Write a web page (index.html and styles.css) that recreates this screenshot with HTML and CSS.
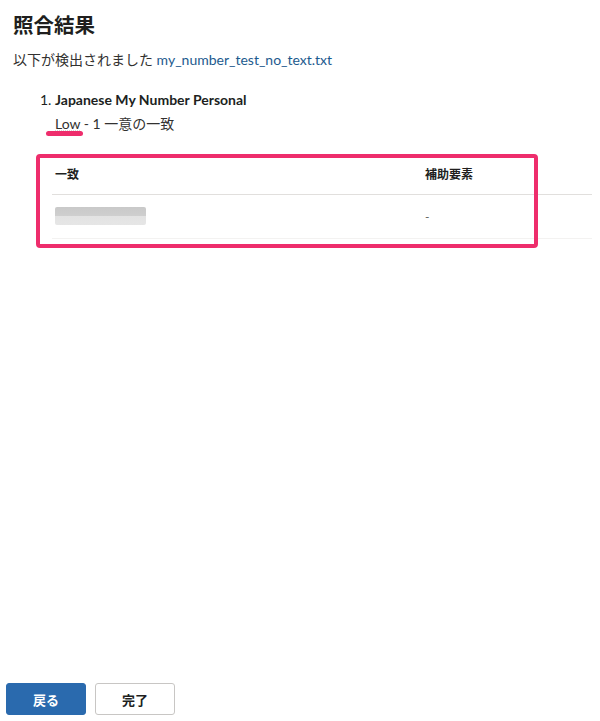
FILE: index.html
```html
<!DOCTYPE html>
<html lang="ja">
<head>
    <meta charset="UTF-8">
    <meta name="viewport" content="width=device-width, initial-scale=1.0">
    <title>照合結果</title>
    <link rel="stylesheet" href="styles.css">
</head>
<body>
    <main class="panel">
        <h1>照合結果</h1>
        <p class="summary">
            以下が検出されました <a href="#" class="file-link">my_number_test_no_text.txt</a>
        </p>

        <ol class="results">
            <li>
                <span class="result-name">Japanese My Number Personal</span>
                <div class="result-meta">
                    <span class="level">Low</span> - 1 一意の一致
                    <span class="mark-underline"></span>
                </div>

                <div class="match-wrap">
                    <table class="match-table">
                        <thead>
                            <tr>
                                <th class="col-match">一致</th>
                                <th>補助要素</th>
                            </tr>
                        </thead>
                        <tbody>
                            <tr>
                                <td class="col-match"><span class="redacted"></span></td>
                                <td>-</td>
                            </tr>
                        </tbody>
                    </table>
                    <div class="mark-box"></div>
                </div>
            </li>
        </ol>
    </main>

    <footer class="actions">
        <button class="btn btn-primary">戻る</button>
        <button class="btn btn-secondary">完了</button>
    </footer>
</body>
</html>
```

FILE: styles.css
```css
* {
    margin: 0;
    padding: 0;
    box-sizing: border-box;
}

body {
    font-family: Lato, "Noto Sans CJK JP", sans-serif;
    background: #fff;
    color: #323130;
    min-height: 100vh;
    display: flex;
    flex-direction: column;
    padding: 0 0 6px;
}

.panel {
    padding: 10px 0 0 13px;
    flex: 1;
}

h1 {
    font-size: 20.5px;
    font-weight: 700;
    line-height: 30px;
    color: #201f1e;
    margin-bottom: 11px;
}

.summary {
    font-size: 14px;
    line-height: 18px;
    color: #323130;
}

.file-link {
    color: #1d5a8e;
    text-decoration: none;
}

.results {
    list-style: none;
    margin-top: 22px;
    padding-left: 27px;
}

.result-name {
    display: block;
    font-size: 14px;
    font-weight: 700;
    line-height: 18px;
    color: #201f1e;
}

.result-name::before {
    content: "1. ";
    font-weight: 400;
}

.result-meta {
    position: relative;
    margin-top: 6px;
    padding-left: 15px;
    font-size: 14px;
    line-height: 18px;
    color: #323130;
}

.level {
    text-decoration: underline;
    text-decoration-style: dotted;
    text-underline-offset: 2px;
}

.mark-underline {
    position: absolute;
    left: 6px;
    top: 16px;
    width: 37px;
    height: 5px;
    border-radius: 3px;
    background: #ee2d6c;
}

.match-wrap {
    position: relative;
    margin-top: 21px;
    margin-left: 12px;
    width: 540px;
}

.match-table {
    width: 100%;
    border-collapse: collapse;
    font-size: 12px;
    color: #201f1e;
}

.match-table th {
    text-align: left;
    font-weight: 600;
    height: 40px;
    padding: 0 3px;
    border-bottom: 1px solid #e1dfdd;
}

.match-table td {
    height: 44px;
    padding: 0 3px;
    border-bottom: 1px solid #f3f2f1;
    color: #605e5c;
}

.col-match {
    width: 370px;
}

.redacted {
    display: block;
    width: 91px;
    height: 18px;
    background: linear-gradient(#c9c9c9 0%, #cfcfcf 50%, #e3e3e3 52%, #e6e6e6 100%);
    border-radius: 2px;
    filter: blur(0.6px);
}

.mark-box {
    position: absolute;
    left: -16px;
    top: 0;
    width: 502px;
    height: 94px;
    border: 4px solid #ee2d6c;
    border-radius: 4px;
}

.actions {
    display: flex;
    gap: 9px;
    padding-left: 6px;
}

.btn {
    width: 80px;
    height: 32px;
    border-radius: 3px;
    font-family: inherit;
    font-size: 13px;
    font-weight: 700;
    cursor: pointer;
}

.btn-primary {
    background: #2a6aae;
    border: 1px solid #2a6aae;
    color: #fff;
}

.btn-secondary {
    background: #fff;
    border: 1px solid #c8c6c4;
    color: #201f1e;
}
```
